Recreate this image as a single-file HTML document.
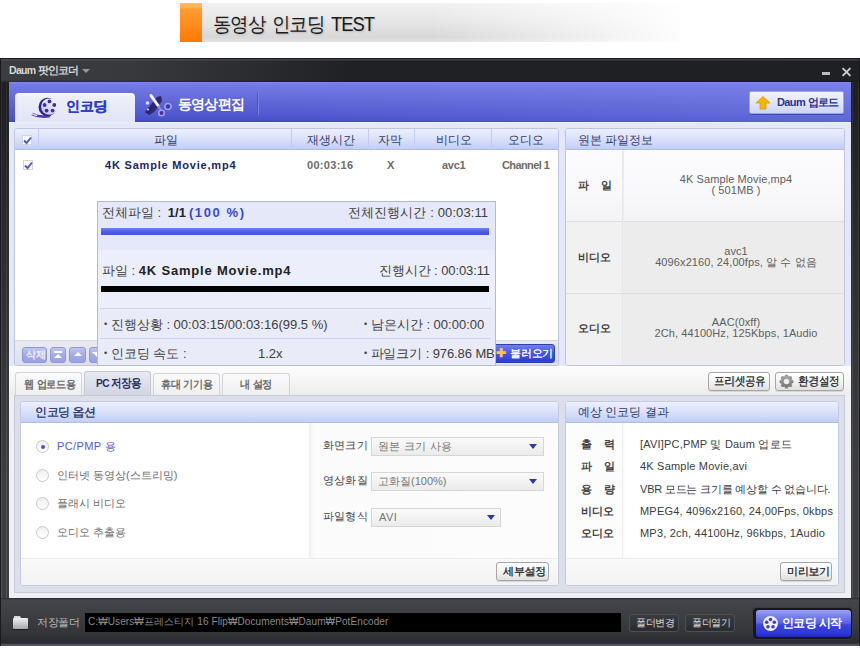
<!DOCTYPE html>
<html><head><meta charset="utf-8">
<style>
*{margin:0;padding:0;box-sizing:border-box}
html,body{width:860px;height:650px;overflow:hidden;background:#fff;font-family:"Liberation Sans",sans-serif}
.a{position:absolute}
.t{position:absolute;white-space:nowrap;line-height:1}
#ban{left:180px;top:3px;width:500px;height:39px;background:linear-gradient(90deg,rgba(255,255,255,0) 0%,rgba(255,255,255,0) 50%,rgba(255,255,255,.95) 100%),linear-gradient(180deg,#f1f1f1 0%,#e8e8e8 40%,#d8d8d8 88%,#e2e2e2 100%)}
#banor{left:180px;top:3px;width:22px;height:39px;background:linear-gradient(180deg,#ffc060 0%,#ffb04a 12%,#ff9a30 16%,#ff8c1e 55%,#ff7800 100%)}
#win{left:0;top:58px;width:860px;height:588px;background:linear-gradient(180deg,#1f2023 0px,#1f2023 40px,#2a2b2e 170px,#37383b 330px,#3c3d40 420px,#3c3d40 100%);border:1px solid #1a1a1c}
#title{left:1px;top:59px;width:858px;height:23px;background:linear-gradient(180deg,rgba(90,90,95,.5) 0px,rgba(90,90,95,.5) 1px,rgba(0,0,0,0) 2px,rgba(0,0,0,0) 21px,rgba(0,0,0,.25) 23px),linear-gradient(90deg,#3b3c3f 0px,#38393c 130px,#2c2d30 240px,#202124 350px,#1f2023 100%)}
.fl{position:absolute;top:82px;width:1px;height:517px;background:linear-gradient(180deg,rgba(255,255,255,.06),rgba(255,255,255,.12))}
#tabbar{left:9px;top:82px;width:842px;height:40px;background:linear-gradient(100deg,rgba(125,132,232,0) 30%,rgba(125,132,232,.45) 100%),linear-gradient(180deg,#7e86ee 0px,#737ae2 3px,#6870dc 12px,#5a62d4 24px,#4e57ce 34px,#4850c8 38px,#3c44b8 40px)}
#content{left:9px;top:122px;width:842px;height:476px;background:linear-gradient(180deg,#eef0fa 0px,#e4e7f7 2px,#e4e7f7 244px,#f0f0f2 245px,#f0f0f2 100%)}
.panel{position:absolute;border:1px solid #bcc4ea;border-radius:3px;background:#fff;overflow:hidden}
.phead{position:absolute;left:0;top:0;right:0;height:21px;background:linear-gradient(180deg,#eceffd 0%,#dfe5fb 35%,#cdd8f8 75%,#c0cdf6 100%);border-bottom:1px solid #b2bde6}
.hk{color:#343c6c;font-size:12px}
.btn{position:absolute;border:1px solid #a6a6a6;border-radius:3px;background:linear-gradient(180deg,#ffffff 0%,#f3f3f3 50%,#e0e0e0 100%);box-shadow:0 1px 0 #d6d6d6}
.bt{font-size:11.5px;color:#333;letter-spacing:-0.3px;text-shadow:0.3px 0 0 #444;transform:scaleX(0.88);transform-origin:0 0}
.radio{position:absolute;width:13px;height:13px;border-radius:50%;border:1px solid #c8c8c8;background:linear-gradient(180deg,#efefef,#fff)}
.sel{position:absolute;height:19px;border:1px solid #d6d6d6;background:linear-gradient(180deg,#fafafa,#ebebeb)}
.arr{position:absolute;width:0;height:0;border-left:4.5px solid transparent;border-right:4.5px solid transparent;border-top:5px solid #2838b0;margin-left:1px}
.dg{color:#3e3e3e;font-size:13px}
.lab{color:#444;font-size:11px;font-weight:bold}
.val{color:#606060;font-size:11px;text-align:center;line-height:11px;letter-spacing:0.1px}
.rv{color:#3c3c3c;font-size:11px;letter-spacing:0.2px}
.tk{font-size:11px;color:#6e6c66;font-weight:bold}
.sep{position:absolute;height:1px;background:#cdd2ef}
.tb{position:absolute;height:16px;border-radius:3px;background:linear-gradient(180deg,#c0c6f0 0%,#a2abe4 50%,#9aa3de 100%);border:1px solid #8f98d4}
.tab{position:absolute;border:1px solid #d4d4d8;border-bottom:none;border-radius:3px 3px 0 0;background:linear-gradient(180deg,#fbfbfb,#efeff1)}
.tt{font-size:11px;color:#6a6a6a;font-weight:bold;letter-spacing:-0.2px;transform:scaleX(0.92);transform-origin:0 0}
</style></head><body>

<!-- banner -->
<div id="ban" class="a"></div>
<div id="banor" class="a"></div>
<div class="t" style="left:213px;top:14px;font-size:20px;color:#111;letter-spacing:-1.1px;word-spacing:3px;transform:scaleX(0.92);transform-origin:0 0;color:#1a1a1a;text-shadow:1px 1px 2px rgba(0,0,0,.18)">동영상 인코딩 TEST</div>

<!-- window frame -->
<div id="win" class="a"></div>
<div id="title" class="a"></div>
<div class="fl" style="left:1px"></div>
<div class="fl" style="left:6px"></div>
<div class="fl" style="left:852px"></div>
<div class="fl" style="left:858px"></div>
<div class="t" style="left:9px;top:65px;font-size:10.5px;font-weight:bold;color:#d8d8d8;letter-spacing:-0.7px">Daum 팟인코더</div>
<div class="a" style="left:82px;top:69px;width:0;height:0;border-left:4px solid transparent;border-right:4px solid transparent;border-top:4px solid #999"></div>
<div class="a" style="left:822px;top:72px;width:8px;height:3px;background:#bbb"></div>
<div class="a" style="left:841px;top:71px;width:11px;height:2px;background:#ccc;transform:rotate(45deg)"></div>
<div class="a" style="left:841px;top:71px;width:11px;height:2px;background:#ccc;transform:rotate(-45deg)"></div>

<!-- tab bar -->
<div id="tabbar" class="a"></div>
<div class="a" style="left:15px;top:93px;width:120px;height:30px;border-radius:4px 4px 0 0;background:linear-gradient(180deg,#fafafe 0%,#eeeff9 10%,#e2e4f6 100%)"></div>
<svg class="a" style="left:26px;top:92px" width="36" height="28" viewBox="0 0 36 28">
  <defs><linearGradient id="rg" x1="0" y1="1" x2="1" y2="0"><stop offset="0" stop-color="#b8b4ec"/><stop offset=".6" stop-color="#e4e2f8"/><stop offset="1" stop-color="#ffffff"/></linearGradient></defs>
  <path d="M6 22 Q14 26 24 24" stroke="#4a3eb8" stroke-width="2.8" fill="none"/>
  <path d="M5.5 21.5 Q8 23 11 23.5" stroke="#f4f4ff" stroke-width="1.4" fill="none"/>
  <ellipse cx="21.5" cy="15" rx="9" ry="9.2" fill="#2c2290"/>
  <circle cx="23.2" cy="14.6" r="8.2" fill="url(#rg)"/>
  <circle cx="23.5" cy="9.4" r="1.9" fill="#3a30a0"/><circle cx="28.3" cy="13" r="1.9" fill="#3a30a0"/>
  <circle cx="26.6" cy="18.6" r="1.9" fill="#3a30a0"/><circle cx="20.6" cy="18.6" r="1.9" fill="#3a30a0"/>
  <circle cx="18.6" cy="13" r="1.9" fill="#3a30a0"/>
</svg>
<div class="t" style="left:66px;top:99px;font-size:14px;font-weight:bold;color:#2d3ec8;letter-spacing:-0.3px;text-shadow:0.4px 0 0 #2d3ec8">인코딩</div>
<svg class="a" style="left:140px;top:88px" width="40" height="32" viewBox="0 0 40 32">
  <path d="M5 24 L9 27 L14 24 L22 13 L21 8 L17 9 Z" fill="#2a2268" opacity=".92"/>
  <path d="M11 7.5 L18 17.5" stroke="#f4f4ff" stroke-width="3" stroke-linecap="round"/>
  <path d="M18 18 L21 22" stroke="#9a92dc" stroke-width="2"/>
  <circle cx="28" cy="18.5" r="3" stroke="#a69ee6" stroke-width="1.6" fill="#3c32a4"/>
  <circle cx="21.5" cy="25" r="2.8" stroke="#a69ee6" stroke-width="1.6" fill="#3c32a4"/>
  <circle cx="7.5" cy="15" r="1.8" fill="#dcdcf8"/>
  <circle cx="8" cy="21.5" r="1.1" fill="#c8c8f0"/>
</svg>
<div class="t" style="left:178px;top:97px;font-size:14px;font-weight:bold;color:#fff;letter-spacing:-0.8px">동영상편집</div>
<div class="a" style="left:257px;top:93px;width:1px;height:22px;background:#4a52c0"></div>
<div class="a" style="left:258px;top:93px;width:1px;height:22px;background:#7880e0"></div>
<div class="a" style="left:749px;top:91px;width:95px;height:23px;border:1px solid #9aa2ec;background:linear-gradient(180deg,#f0f2fe 0%,#e2e6fa 50%,#cdd4f6 100%);border-radius:2px;box-shadow:0 1px 0 #4048b8"></div>
<svg class="a" style="left:755px;top:96px" width="16" height="14" viewBox="0 0 16 14">
  <path d="M8 0.5 L15 7 L11 7 L11 13 L5 13 L5 7 L1 7 Z" fill="#f7b500" stroke="#e49400" stroke-width=".8"/>
</svg>
<div class="t" style="left:777px;top:97px;font-size:11px;font-weight:bold;color:#27358f;letter-spacing:-0.6px">Daum 업로드</div>

<!-- content -->
<div id="content" class="a"></div>

<!-- list panel -->
<div class="panel" style="left:14px;top:128px;width:545px;height:238px">
  <div class="phead"></div>
  <div class="a" style="left:23px;top:0;width:1px;height:21px;background:#c4cbf0"></div>
  <div class="a" style="left:276px;top:0;width:1px;height:21px;background:#c4cbf0"></div>
  <div class="a" style="left:353px;top:0;width:1px;height:21px;background:#c4cbf0"></div>
  <div class="a" style="left:399px;top:0;width:1px;height:21px;background:#c4cbf0"></div>
  <div class="a" style="left:476px;top:0;width:1px;height:21px;background:#c4cbf0"></div>
  <div class="a" style="left:0;top:211px;width:543px;height:25px;background:linear-gradient(180deg,#e9eaf1,#dddfec);border-top:1px solid #d4d6e4"></div>
</div>
<div class="a" style="left:22px;top:135px;width:10px;height:10px;background:#fff;border:1px solid #d6d4cc"></div>
<svg class="a" style="left:23px;top:136px" width="9" height="9" viewBox="0 0 9 9"><path d="M1 4.5 L3.5 7 L8 1.5" stroke="#4656de" stroke-width="1.9" fill="none"/></svg>
<div class="a" style="left:23px;top:160px;width:10px;height:10px;background:#fff;border:1px solid #d6d4cc"></div>
<svg class="a" style="left:24px;top:161px" width="9" height="9" viewBox="0 0 9 9"><path d="M1 4.5 L3.5 7 L8 1.5" stroke="#4656de" stroke-width="1.9" fill="none"/></svg>
<div class="t hk" style="left:154px;top:134px">파일</div>
<div class="t hk" style="left:307px;top:134px">재생시간</div>
<div class="t hk" style="left:378px;top:134px">자막</div>
<div class="t hk" style="left:436px;top:134px">비디오</div>
<div class="t hk" style="left:508px;top:134px">오디오</div>

<div class="t" style="left:105px;top:160px;font-size:11px;font-weight:bold;color:#1e2460;letter-spacing:0.8px">4K Sample Movie,mp4</div>
<div class="t tk" style="left:307px;top:160px;letter-spacing:0.3px">00:03:16</div>
<div class="t tk" style="left:387px;top:160px">X</div>
<div class="t tk" style="left:442px;top:160px;letter-spacing:-0.3px">avc1</div>
<div class="t tk" style="left:502px;top:160px;letter-spacing:-0.6px">Channel 1</div>

<div class="tb" style="left:22px;top:347px;width:25px"></div>
<div class="t" style="left:26px;top:350px;font-size:10px;color:#eef0ff;font-weight:bold;letter-spacing:-0.3px">삭제</div>
<div class="tb" style="left:50px;top:347px;width:16px"></div>
<div class="a" style="left:54px;top:351px;width:8px;height:1.5px;background:#fff"></div>
<div class="a" style="left:54px;top:354px;width:0;height:0;border-left:4px solid transparent;border-right:4px solid transparent;border-bottom:4px solid #fff"></div>
<div class="tb" style="left:69px;top:347px;width:17px"></div>
<div class="a" style="left:73.5px;top:352px;width:0;height:0;border-left:4.5px solid transparent;border-right:4.5px solid transparent;border-bottom:4.5px solid #fff"></div>
<div class="tb" style="left:89px;top:347px;width:17px"></div>
<div class="a" style="left:92px;top:352px;width:0;height:0;border-left:5.5px solid transparent;border-right:5.5px solid transparent;border-top:5px solid #fff"></div>

<!-- info panel -->
<div class="panel" style="left:565px;top:128px;width:280px;height:238px">
  <div class="phead"></div>
  <div class="a" style="left:0;top:21px;width:278px;height:71px;background:linear-gradient(180deg,#fcfcfe,#f9f9fb 60%,#f3f3f5)"></div>
  <div class="a" style="left:0;top:92px;width:278px;height:72px;background:#ececec;border-top:1px solid #dedede"></div>
  <div class="a" style="left:0;top:164px;width:278px;height:72px;background:#ececec;border-top:1px solid #dedede"></div>
  <div class="a" style="left:0;top:93px;width:56px;height:143px;background:#f1f1f1"></div><div class="a" style="left:56px;top:21px;width:2px;height:215px;background:linear-gradient(90deg,#e4e4e8,#f0f0f0)"></div><div class="a" style="left:0;top:164px;width:278px;height:1px;background:#dedede"></div>
</div>
<div class="t hk" style="left:578px;top:134px">원본 파일정보</div>
<div class="t lab" style="left:578px;top:180px">파&nbsp;&nbsp;&nbsp;&nbsp;일</div>
<div class="t lab" style="left:578px;top:252px">비디오</div>
<div class="t lab" style="left:578px;top:323px">오디오</div>
<div class="t val" style="left:625px;top:174px;width:222px">4K Sample Movie,mp4<br>( 501MB )</div>
<div class="t val" style="left:625px;top:246px;width:222px">avc1<br>4096x2160, 24,00fps, 알 수 없음</div>
<div class="t val" style="left:625px;top:317px;width:222px">AAC(0xff)<br>2Ch, 44100Hz, 125Kbps, 1Audio</div>

<!-- 불러오기 -->
<div class="a" style="left:490px;top:344px;width:65px;height:19px;border-radius:3px;background:linear-gradient(180deg,#7080f0 0%,#4656e4 50%,#2c3ed0 100%);border:1px solid #3040b0"></div>
<div class="t" style="left:496px;top:347px;font-size:12px;font-weight:bold;color:#ffc830">✚</div>
<div class="t" style="left:510px;top:348px;font-size:11px;color:#fff;letter-spacing:-0.2px;text-shadow:0 0 0.5px #fff">불러오기</div>

<!-- progress dialog -->
<div class="a" style="left:97px;top:201px;width:399px;height:165px;border:1px solid #b6bacb;background:#e9ebf9"></div>
<div class="a" style="left:98px;top:202px;width:397px;height:48px;background:#e4e8f9"></div>
<div class="a" style="left:98px;top:250px;width:397px;height:58px;background:#eceefb"></div>
<div class="t dg" style="left:102px;top:206px">전체파일 : <b style="color:#222;margin-left:3px">1/1</b><b style="color:#3a4ac8;letter-spacing:1.6px;margin-left:3px">(100 %)</b></div>
<div class="t dg" style="left:348px;top:206px;letter-spacing:0.1px">전체진행시간 : 00:03:11</div>
<div class="a" style="left:101px;top:228px;width:388px;height:7px;background:linear-gradient(180deg,#7080f2,#4a58e6 60%,#4654e0)"></div>
<div class="t dg" style="left:102px;top:264px">파일 : <b style="color:#222;letter-spacing:0.8px">4K Sample Movie.mp4</b></div>
<div class="t dg" style="left:379px;top:264px;letter-spacing:-0.1px">진행시간 : 00:03:11</div>
<div class="a" style="left:101px;top:286px;width:388px;height:6px;background:#000"></div>
<div class="sep" style="left:100px;top:308px;width:391px"></div>
<div class="sep" style="left:100px;top:338px;width:391px"></div>
<div class="t dg" style="left:104px;top:318px"><span style="font-size:9px;vertical-align:2px">•</span> 진행상황 : 00:03:15/00:03:16(99.5 %)</div>
<div class="t dg" style="left:364px;top:318px"><span style="font-size:9px;vertical-align:2px">•</span> 남은시간 : 00:00:00</div>
<div class="t dg" style="left:104px;top:347px"><span style="font-size:9px;vertical-align:2px">•</span> 인코딩 속도 :</div>
<div class="t dg" style="left:258px;top:347px">1.2x</div>
<div class="t dg" style="left:364px;top:347px;letter-spacing:-0.1px"><span style="font-size:9px;vertical-align:2px">•</span> 파일크기 : 976.86 MB</div>

<!-- buttons row bg -->
<div class="a" style="left:9px;top:366px;width:842px;height:29px;background:linear-gradient(180deg,#fdfdfd,#f6f6f6 50%,#ececee)"></div>
<div class="btn" style="left:708px;top:372px;width:62px;height:19px"></div>
<div class="t bt" style="left:714px;top:376px">프리셋공유</div>
<div class="btn" style="left:775px;top:372px;width:69px;height:19px"></div>
<svg class="a" style="left:779px;top:374px" width="15" height="15" viewBox="0 0 15 15"><defs><linearGradient id="gg" x1="0" y1="0" x2="0" y2="1"><stop offset="0" stop-color="#a8a8a8"/><stop offset="1" stop-color="#747474"/></linearGradient></defs><circle cx="12.70" cy="7.50" r="1.9" fill="url(#gg)"/><circle cx="11.18" cy="11.18" r="1.9" fill="url(#gg)"/><circle cx="7.50" cy="12.70" r="1.9" fill="url(#gg)"/><circle cx="3.82" cy="11.18" r="1.9" fill="url(#gg)"/><circle cx="2.30" cy="7.50" r="1.9" fill="url(#gg)"/><circle cx="3.82" cy="3.82" r="1.9" fill="url(#gg)"/><circle cx="7.50" cy="2.30" r="1.9" fill="url(#gg)"/><circle cx="11.18" cy="3.82" r="1.9" fill="url(#gg)"/><circle cx="7.5" cy="7.5" r="5.4" fill="url(#gg)"/><circle cx="7.5" cy="7.5" r="2.8" fill="#eeeeee"/></svg>
<div class="t bt" style="left:798px;top:376px">환경설정</div>

<!-- lower tabs -->
<div class="tab" style="left:15px;top:372px;width:67px;height:23px"></div>
<div class="t tt" style="left:24px;top:379px">웹 업로드용</div>
<div class="a" style="left:84px;top:371px;width:67px;height:24px;border:1px solid #c4c6d2;border-bottom:none;border-radius:3px 3px 0 0;background:linear-gradient(180deg,#e8eaf2,#d2d4e2)"></div>
<div class="t" style="left:96px;top:378px;font-size:11.5px;font-weight:bold;color:#262c6a;letter-spacing:-0.7px;transform:scaleX(0.88);transform-origin:0 0">PC 저장용</div>
<div class="tab" style="left:153px;top:373px;width:67px;height:22px"></div>
<div class="t tt" style="left:161px;top:379px">휴대 기기용</div>
<div class="tab" style="left:222px;top:373px;width:68px;height:22px"></div>
<div class="t tt" style="left:240px;top:379px">내 설정</div>

<!-- lower outer panel -->
<div class="a" style="left:14px;top:395px;width:831px;height:198px;border:1px solid #c6c9d8;background:#dcdeea"></div>
<div class="panel" style="left:20px;top:401px;width:539px;height:185px;border-color:#c4cae6">
  <div class="phead"></div>
  <div class="a" style="left:288px;top:21px;width:249px;height:135px;background:linear-gradient(90deg,#ececec 0px,#f6f6f6 2px,#fbfbfb 5px,#fcfcfc 100%)"></div>
  <div class="a" style="left:0;top:156px;width:537px;height:27px;background:linear-gradient(180deg,#fafafa,#f2f2f2);border-top:1px solid #ececec"></div>
</div>
<div class="t hk" style="left:35px;top:406px;letter-spacing:-0.5px;text-shadow:0.3px 0 0 #343c6c">인코딩 옵션</div>
<div class="radio" style="left:36px;top:440px"></div>
<div class="a" style="left:40.5px;top:444.5px;width:4px;height:4px;border-radius:50%;background:#4050e0"></div>
<div class="t" style="left:57px;top:441px;font-size:11px;color:#525ccc;letter-spacing:0.4px">PC/PMP 용</div>
<div class="radio" style="left:36px;top:469px"></div>
<div class="t" style="left:57px;top:470px;font-size:11px;color:#6e6e6e">인터넷 동영상(스트리밍)</div>
<div class="radio" style="left:36px;top:497px"></div>
<div class="t" style="left:57px;top:498px;font-size:11px;color:#6e6e6e">플래시 비디오</div>
<div class="radio" style="left:36px;top:526px"></div>
<div class="t" style="left:57px;top:527px;font-size:11px;color:#6e6e6e">오디오 추출용</div>

<div class="t" style="left:323px;top:440px;font-size:11px;color:#444;letter-spacing:0.2px">화면크기</div>
<div class="sel" style="left:371px;top:437px;width:173px"></div>
<div class="t" style="left:378px;top:441px;font-size:11px;color:#777;letter-spacing:0.3px">원본 크기 사용</div>
<div class="arr" style="left:528px;top:444px"></div>
<div class="t" style="left:323px;top:475px;font-size:11px;color:#444;letter-spacing:0.2px">영상화질</div>
<div class="sel" style="left:371px;top:472px;width:173px"></div>
<div class="t" style="left:378px;top:476px;font-size:11px;color:#777">고화질(100%)</div>
<div class="arr" style="left:528px;top:479px"></div>
<div class="t" style="left:323px;top:511px;font-size:11px;color:#444;letter-spacing:0.2px">파일형식</div>
<div class="sel" style="left:371px;top:508px;width:130px"></div>
<div class="t" style="left:379px;top:512px;font-size:11px;color:#777;letter-spacing:0.5px">AVI</div>
<div class="arr" style="left:486px;top:515px"></div>

<div class="btn" style="left:496px;top:562px;width:53px;height:19px"></div>
<div class="t" style="left:503px;top:566px;font-size:11px;color:#333;letter-spacing:-0.3px;text-shadow:0.3px 0 0 #333">세부설정</div>

<div class="panel" style="left:565px;top:401px;width:274px;height:185px;border-color:#c4cae6">
  <div class="phead"></div>
  <div class="a" style="left:0;top:21px;width:56px;height:135px;background:#fcfcfc"></div><div class="a" style="left:56px;top:21px;width:3px;height:135px;background:linear-gradient(90deg,#ebebeb,#f8f8f8,#fff)"></div>
  <div class="a" style="left:0;top:156px;width:272px;height:27px;background:linear-gradient(180deg,#fafafa,#f2f2f2);border-top:1px solid #ececec"></div>
</div>
<div class="t hk" style="left:578px;top:406px">예상 인코딩 결과</div>
<div class="t lab" style="left:581px;top:439px">출&nbsp;&nbsp;&nbsp;&nbsp;력</div>
<div class="t lab" style="left:581px;top:461px">파&nbsp;&nbsp;&nbsp;&nbsp;일</div>
<div class="t lab" style="left:581px;top:484px">용&nbsp;&nbsp;&nbsp;&nbsp;량</div>
<div class="t lab" style="left:581px;top:506px">비디오</div>
<div class="t lab" style="left:581px;top:528px">오디오</div>
<div class="t rv" style="left:640px;top:439px">[AVI]PC,PMP 및 Daum 업로드</div>
<div class="t rv" style="left:640px;top:461px">4K Sample Movie,avi</div>
<div class="t rv" style="left:640px;top:484px;letter-spacing:-0.2px">VBR 모드는 크기를 예상할 수 없습니다.</div>
<div class="t rv" style="left:640px;top:506px">MPEG4, 4096x2160, 24,00Fps, 0kbps</div>
<div class="t rv" style="left:640px;top:528px">MP3, 2ch, 44100Hz, 96kbps, 1Audio</div>
<div class="btn" style="left:780px;top:562px;width:52px;height:19px"></div>
<div class="t" style="left:787px;top:566px;font-size:11px;color:#333;letter-spacing:-0.3px;text-shadow:0.3px 0 0 #333">미리보기</div>

<!-- bottom bar -->
<div class="a" style="left:1px;top:598px;width:858px;height:48px;background:linear-gradient(180deg,#2a2b2e 0px,#45464a 2px,#404144 12px,#35363a 34px,#2a2b2e 45px,#58595c 47px,#58595c 48px)"></div>
<svg class="a" style="left:12px;top:614px" width="18" height="17" viewBox="0 0 18 17"><defs><linearGradient id="fg" x1="0" y1="0" x2="0" y2="1"><stop offset="0" stop-color="#f0f0f0"/><stop offset="1" stop-color="#a8a8a8"/></linearGradient></defs><path d="M2 2 L8 2 L9 4 L2 4 Z" fill="#d8d8d8"/><rect x="1" y="4" width="15" height="11" rx="1" fill="url(#fg)"/><rect x="1" y="15" width="15" height="1" fill="#1a1a1a"/></svg>
<div class="t" style="left:37px;top:617px;font-size:11px;color:#b8b8b8;letter-spacing:-0.3px">저장폴더</div>
<div class="a" style="left:85px;top:613px;width:536px;height:19px;background:#000"></div>
<div class="t" style="left:88px;top:617px;font-size:10px;color:#8a8a8a;letter-spacing:0.1px">C:₩Users₩프레스티지 16 Flip₩Documents₩Daum₩PotEncoder</div>
<div class="a" style="left:629px;top:614px;width:50px;height:18px;border:1px solid #4e4f52;border-radius:3px;background:linear-gradient(180deg,#3a3b3e,#2a2b2e)"></div>
<div class="t" style="left:636px;top:618px;font-size:10px;color:#dcdcdc;letter-spacing:-0.4px">폴더변경</div>
<div class="a" style="left:685px;top:614px;width:50px;height:18px;border:1px solid #4e4f52;border-radius:3px;background:linear-gradient(180deg,#3a3b3e,#2a2b2e)"></div>
<div class="t" style="left:692px;top:618px;font-size:10px;color:#dcdcdc;letter-spacing:-0.4px">폴더열기</div>
<div class="a" style="left:752px;top:607px;width:101px;height:33px;border-radius:5px;background:#18181a;border:1px solid #3a3b3e"></div>
<div class="a" style="left:756px;top:610px;width:95px;height:27px;border-radius:3px;background:linear-gradient(180deg,#9ca2f6 0%,#7c84f0 20%,#5a62e8 48%,#3a44e0 55%,#3038d8 85%,#2228b8 100%)"></div>
<svg class="a" style="left:762px;top:615px" width="17" height="17" viewBox="0 0 17 17"><circle cx="8.5" cy="8.5" r="7.5" fill="#f0f0ff"/><circle cx="8.5" cy="4.5" r="1.8" fill="#3a40c8"/><circle cx="12.3" cy="7.3" r="1.8" fill="#3a40c8"/><circle cx="11" cy="11.8" r="1.8" fill="#3a40c8"/><circle cx="6" cy="11.8" r="1.8" fill="#3a40c8"/><circle cx="4.7" cy="7.3" r="1.8" fill="#3a40c8"/></svg>
<div class="t" style="left:782px;top:617px;font-size:12px;font-weight:bold;color:#fff;letter-spacing:-0.7px">인코딩 시작</div>

</body></html>
